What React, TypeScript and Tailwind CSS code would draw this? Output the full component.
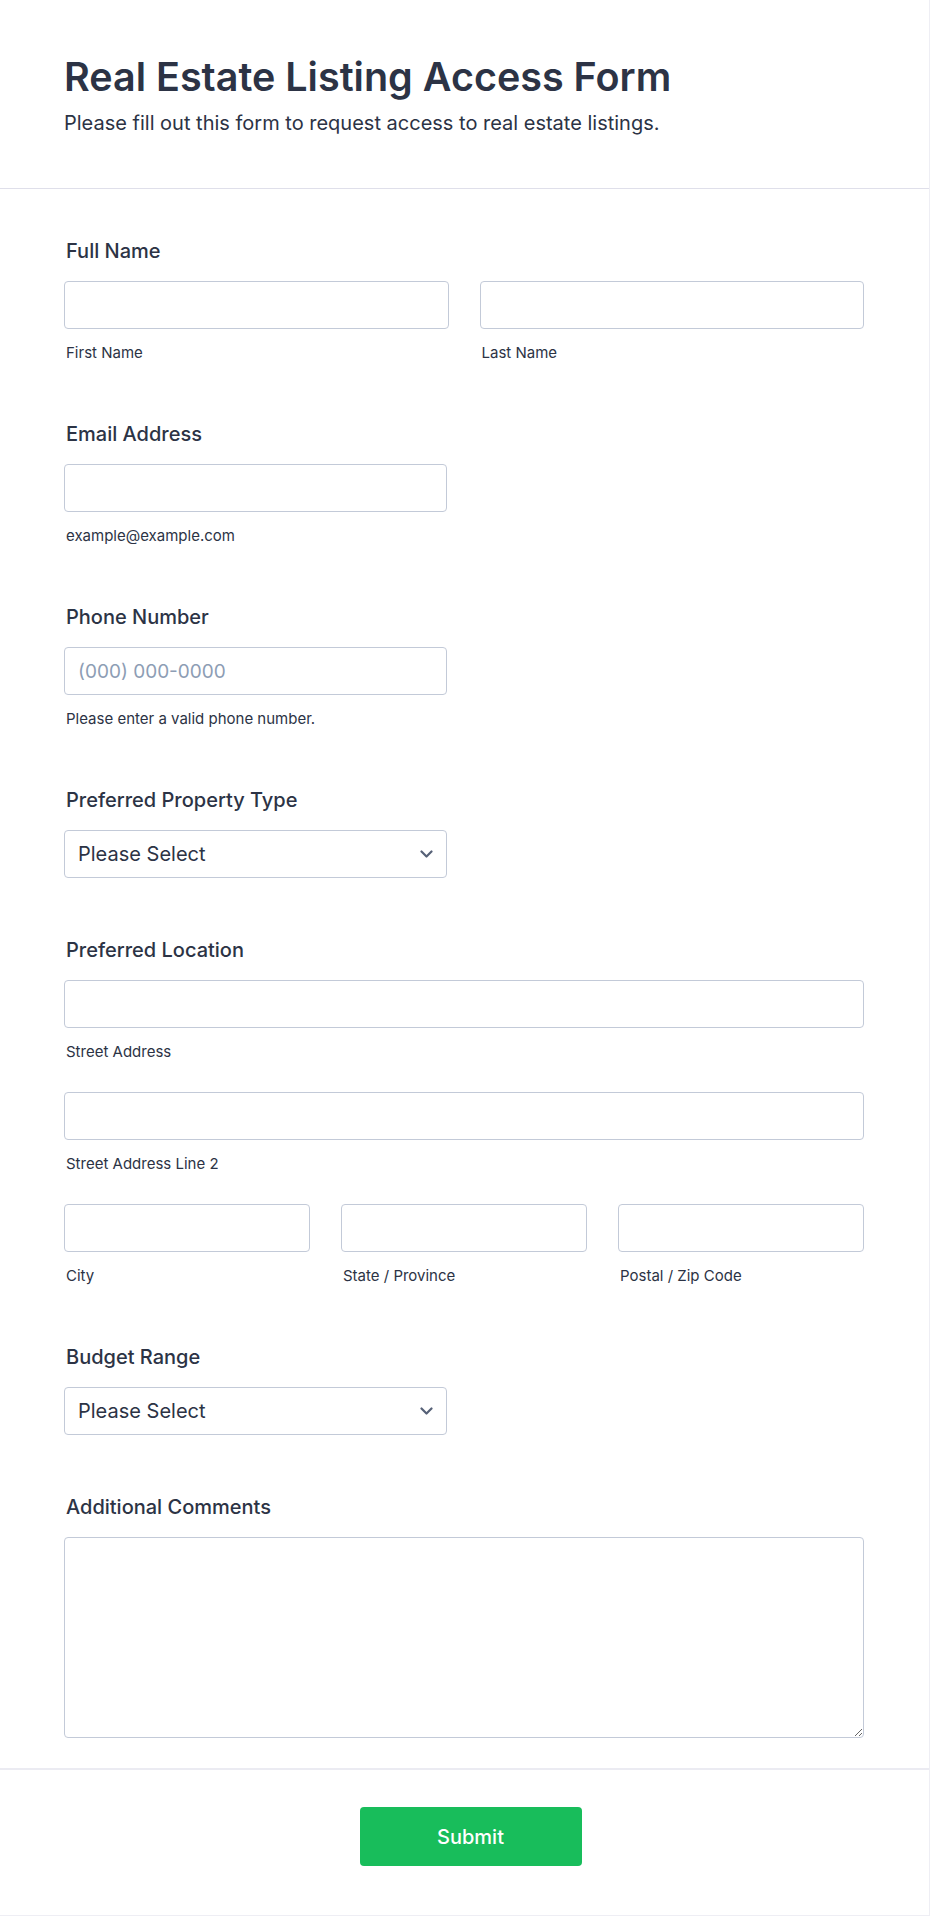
import React from "react";

const font = { fontFamily: "Inter, 'Noto Sans', sans-serif" };

function Label({ children }: { children: React.ReactNode }) {
  return (
    <div className="pl-[2px] text-[20px] leading-[24px] font-medium text-[#2c3345] mb-[18px]">
      {children}
    </div>
  );
}

function Sub({ children }: { children: React.ReactNode }) {
  return (
    <div className="pl-[2px] mt-[15px] text-[15px] leading-[18px] text-[#2c3345]">{children}</div>
  );
}

function Input({ placeholder }: { placeholder?: string }) {
  return (
    <input
      type="text"
      placeholder={placeholder}
      className="block w-full h-[48px] border border-[#c3cad8] rounded-[4px] bg-white px-[13px] text-[19px] text-[#2c3345] placeholder:text-[#8d9db4] outline-none"
    />
  );
}

function Select() {
  return (
    <div className="w-[383px] h-[48px] border border-[#c3cad8] rounded-[4px] bg-white flex items-center justify-between pl-[13px] pr-[13px]">
      <span className="text-[20px] text-[#2c3345]">Please Select</span>
      <svg width="13" height="8" viewBox="0 0 13 8" fill="none">
        <path d="M1.5 1.5L6.5 6.5L11.5 1.5" stroke="#566177" strokeWidth="2.2" strokeLinecap="round" strokeLinejoin="round" />
      </svg>
    </div>
  );
}

export default function App() {
  return (
    <div style={font} className="w-[930px] bg-white border-r border-b border-[#eeeef4] text-[#2c3345]">
      <header className="px-[64px] pt-[53px] pb-[53px] border-b border-[#dfdfea]">
        <h1 className="text-[39.5px] leading-[48px] font-semibold text-[#2c3345]">
          Real Estate Listing Access Form
        </h1>
        <p className="mt-[10px] text-[20px] leading-[24px] text-[#2c3345]">
          Please fill out this form to request access to real estate listings.
        </p>
      </header>

      <main className="px-[64px] pt-[50px] pb-[30px] pr-[65px] flex flex-col gap-[60px]">
        <section>
          <Label>Full Name</Label>
          <div className="grid grid-cols-2 gap-x-[31px]">
            <div>
              <Input />
              <Sub>First Name</Sub>
            </div>
            <div>
              <Input />
              <Sub>Last Name</Sub>
            </div>
          </div>
        </section>

        <section>
          <Label>Email Address</Label>
          <div className="w-[383px]">
            <Input />
          </div>
          <Sub>example@example.com</Sub>
        </section>

        <section>
          <Label>Phone Number</Label>
          <div className="w-[383px]">
            <Input placeholder="(000) 000-0000" />
          </div>
          <Sub>Please enter a valid phone number.</Sub>
        </section>

        <section>
          <Label>Preferred Property Type</Label>
          <Select />
        </section>

        <section>
          <Label>Preferred Location</Label>
          <div className="flex flex-col gap-[31px]">
            <div>
              <Input />
              <Sub>Street Address</Sub>
            </div>
            <div>
              <Input />
              <Sub>Street Address Line 2</Sub>
            </div>
            <div className="grid grid-cols-3 gap-x-[31px]">
              <div>
                <Input />
                <Sub>City</Sub>
              </div>
              <div>
                <Input />
                <Sub>State / Province</Sub>
              </div>
              <div>
                <Input />
                <Sub>Postal / Zip Code</Sub>
              </div>
            </div>
          </div>
        </section>

        <section>
          <Label>Budget Range</Label>
          <Select />
        </section>

        <section>
          <Label>Additional Comments</Label>
          <textarea className="block w-full h-[201px] border border-[#c3cad8] rounded-[4px] bg-white px-[14px] py-[10px] text-[18px] text-[#2c3345] outline-none" />
        </section>
      </main>

      <footer className="border-t-2 border-[#ebebf2] pt-[37px] pb-[49px] pl-[12px] flex justify-center">
        <button className="w-[222px] h-[59px] rounded-[4px] bg-[#18bd5b] text-white text-[20px] font-medium">
          Submit
        </button>
      </footer>
    </div>
  );
}
